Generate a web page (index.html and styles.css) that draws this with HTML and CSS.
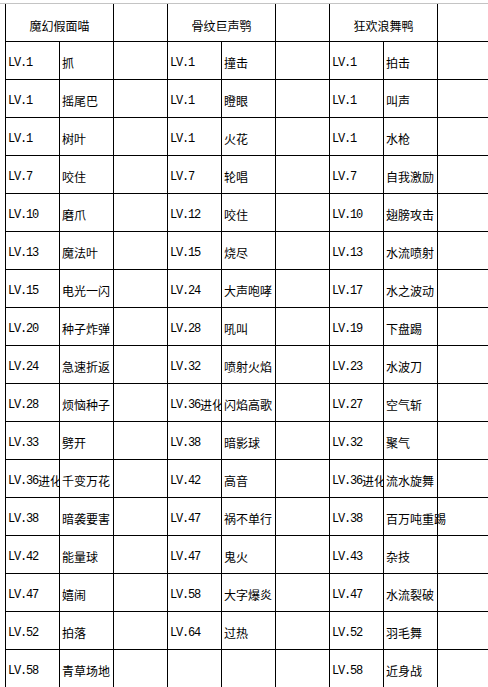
FILE: index.html
```html
<!DOCTYPE html>
<html lang="zh">
<head>
<meta charset="utf-8">
<title>技能表</title>
<link rel="stylesheet" href="styles.css">
</head>
<body>
<div class="page">
<div class="sheet">
<div class="h span2">魔幻假面喵</div><div class="h"></div><div class="h span2">骨纹巨声鹗</div><div class="h"></div><div class="h span2">狂欢浪舞鸭</div><div class="h"></div>

<div class="c lv">LV.1</div><div class="c">抓</div><div class="c"></div><div class="c lv">LV.1</div><div class="c">撞击</div><div class="c"></div><div class="c lv">LV.1</div><div class="c">拍击</div><div class="c"></div>
<div class="c lv">LV.1</div><div class="c">摇尾巴</div><div class="c"></div><div class="c lv">LV.1</div><div class="c">瞪眼</div><div class="c"></div><div class="c lv">LV.1</div><div class="c">叫声</div><div class="c"></div>
<div class="c lv">LV.1</div><div class="c">树叶</div><div class="c"></div><div class="c lv">LV.1</div><div class="c">火花</div><div class="c"></div><div class="c lv">LV.1</div><div class="c">水枪</div><div class="c"></div>
<div class="c lv">LV.7</div><div class="c">咬住</div><div class="c"></div><div class="c lv">LV.7</div><div class="c">轮唱</div><div class="c"></div><div class="c lv">LV.7</div><div class="c">自我激励</div><div class="c"></div>
<div class="c lv">LV.10</div><div class="c">磨爪</div><div class="c"></div><div class="c lv">LV.12</div><div class="c">咬住</div><div class="c"></div><div class="c lv">LV.10</div><div class="c">翅膀攻击</div><div class="c"></div>
<div class="c lv">LV.13</div><div class="c">魔法叶</div><div class="c"></div><div class="c lv">LV.15</div><div class="c">烧尽</div><div class="c"></div><div class="c lv">LV.13</div><div class="c">水流喷射</div><div class="c"></div>
<div class="c lv">LV.15</div><div class="c">电光一闪</div><div class="c"></div><div class="c lv">LV.24</div><div class="c">大声咆哮</div><div class="c"></div><div class="c lv">LV.17</div><div class="c">水之波动</div><div class="c"></div>
<div class="c lv">LV.20</div><div class="c">种子炸弹</div><div class="c"></div><div class="c lv">LV.28</div><div class="c">吼叫</div><div class="c"></div><div class="c lv">LV.19</div><div class="c">下盘踢</div><div class="c"></div>
<div class="c lv">LV.24</div><div class="c">急速折返</div><div class="c"></div><div class="c lv">LV.32</div><div class="c">喷射火焰</div><div class="c"></div><div class="c lv">LV.23</div><div class="c">水波刀</div><div class="c"></div>
<div class="c lv">LV.28</div><div class="c">烦恼种子</div><div class="c"></div><div class="c lv">LV.36<span class="cj">进化</span></div><div class="c">闪焰高歌</div><div class="c"></div><div class="c lv">LV.27</div><div class="c">空气斩</div><div class="c"></div>
<div class="c lv">LV.33</div><div class="c">劈开</div><div class="c"></div><div class="c lv">LV.38</div><div class="c">暗影球</div><div class="c"></div><div class="c lv">LV.32</div><div class="c">聚气</div><div class="c"></div>
<div class="c lv">LV.36<span class="cj">进化</span></div><div class="c">千变万花</div><div class="c"></div><div class="c lv">LV.42</div><div class="c">高音</div><div class="c"></div><div class="c lv">LV.36<span class="cj">进化</span></div><div class="c">流水旋舞</div><div class="c"></div>
<div class="c lv">LV.38</div><div class="c">暗袭要害</div><div class="c"></div><div class="c lv">LV.47</div><div class="c">祸不单行</div><div class="c"></div><div class="c lv">LV.38</div><div class="c ov">百万吨重踢</div><div class="c"></div>
<div class="c lv">LV.42</div><div class="c">能量球</div><div class="c"></div><div class="c lv">LV.47</div><div class="c">鬼火</div><div class="c"></div><div class="c lv">LV.43</div><div class="c">杂技</div><div class="c"></div>
<div class="c lv">LV.47</div><div class="c">嬉闹</div><div class="c"></div><div class="c lv">LV.58</div><div class="c">大字爆炎</div><div class="c"></div><div class="c lv">LV.47</div><div class="c">水流裂破</div><div class="c"></div>
<div class="c lv">LV.52</div><div class="c">拍落</div><div class="c"></div><div class="c lv">LV.64</div><div class="c">过热</div><div class="c"></div><div class="c lv">LV.52</div><div class="c">羽毛舞</div><div class="c"></div>
<div class="c lv">LV.58</div><div class="c">青草场地</div><div class="c"></div><div class="c"></div><div class="c"></div><div class="c"></div><div class="c lv">LV.58</div><div class="c">近身战</div><div class="c"></div>
</div>
</div>
</body>
</html>
```
FILE: styles.css
```css
html, body {
  margin: 0;
  padding: 0;
  background: #ffffff;
  overflow: hidden;
}

.page {
  margin-top: 3px;
  border-top: 1px solid #c4c4c4;
  width: 488px;
  overflow: hidden;
}

.sheet {
  display: grid;
  grid-template-columns: repeat(9, 54px);
  grid-auto-rows: 38px;
  margin-left: 5px;
  width: 486px;
}

.h,
.c {
  box-sizing: border-box;
  border-left: 1px solid #000;
  border-bottom: 1px solid #000;
  overflow: hidden;
  white-space: nowrap;
  font-family: "Noto Sans CJK SC", "Noto Sans", sans-serif;
  font-size: 12px;
  color: #000;
  display: flex;
  align-items: center;
}

.h {
  justify-content: center;
  padding-top: 6px;
}

.span2 {
  grid-column: span 2;
}

.c {
  padding: 4px 0 0 2px;
}

.ov {
  overflow: visible;
}

.lv {
  font-family: "Liberation Mono", monospace;
  letter-spacing: -1.2px;
}

.cj {
  font-family: "Noto Sans CJK SC", sans-serif;
  letter-spacing: 0;
}
```
